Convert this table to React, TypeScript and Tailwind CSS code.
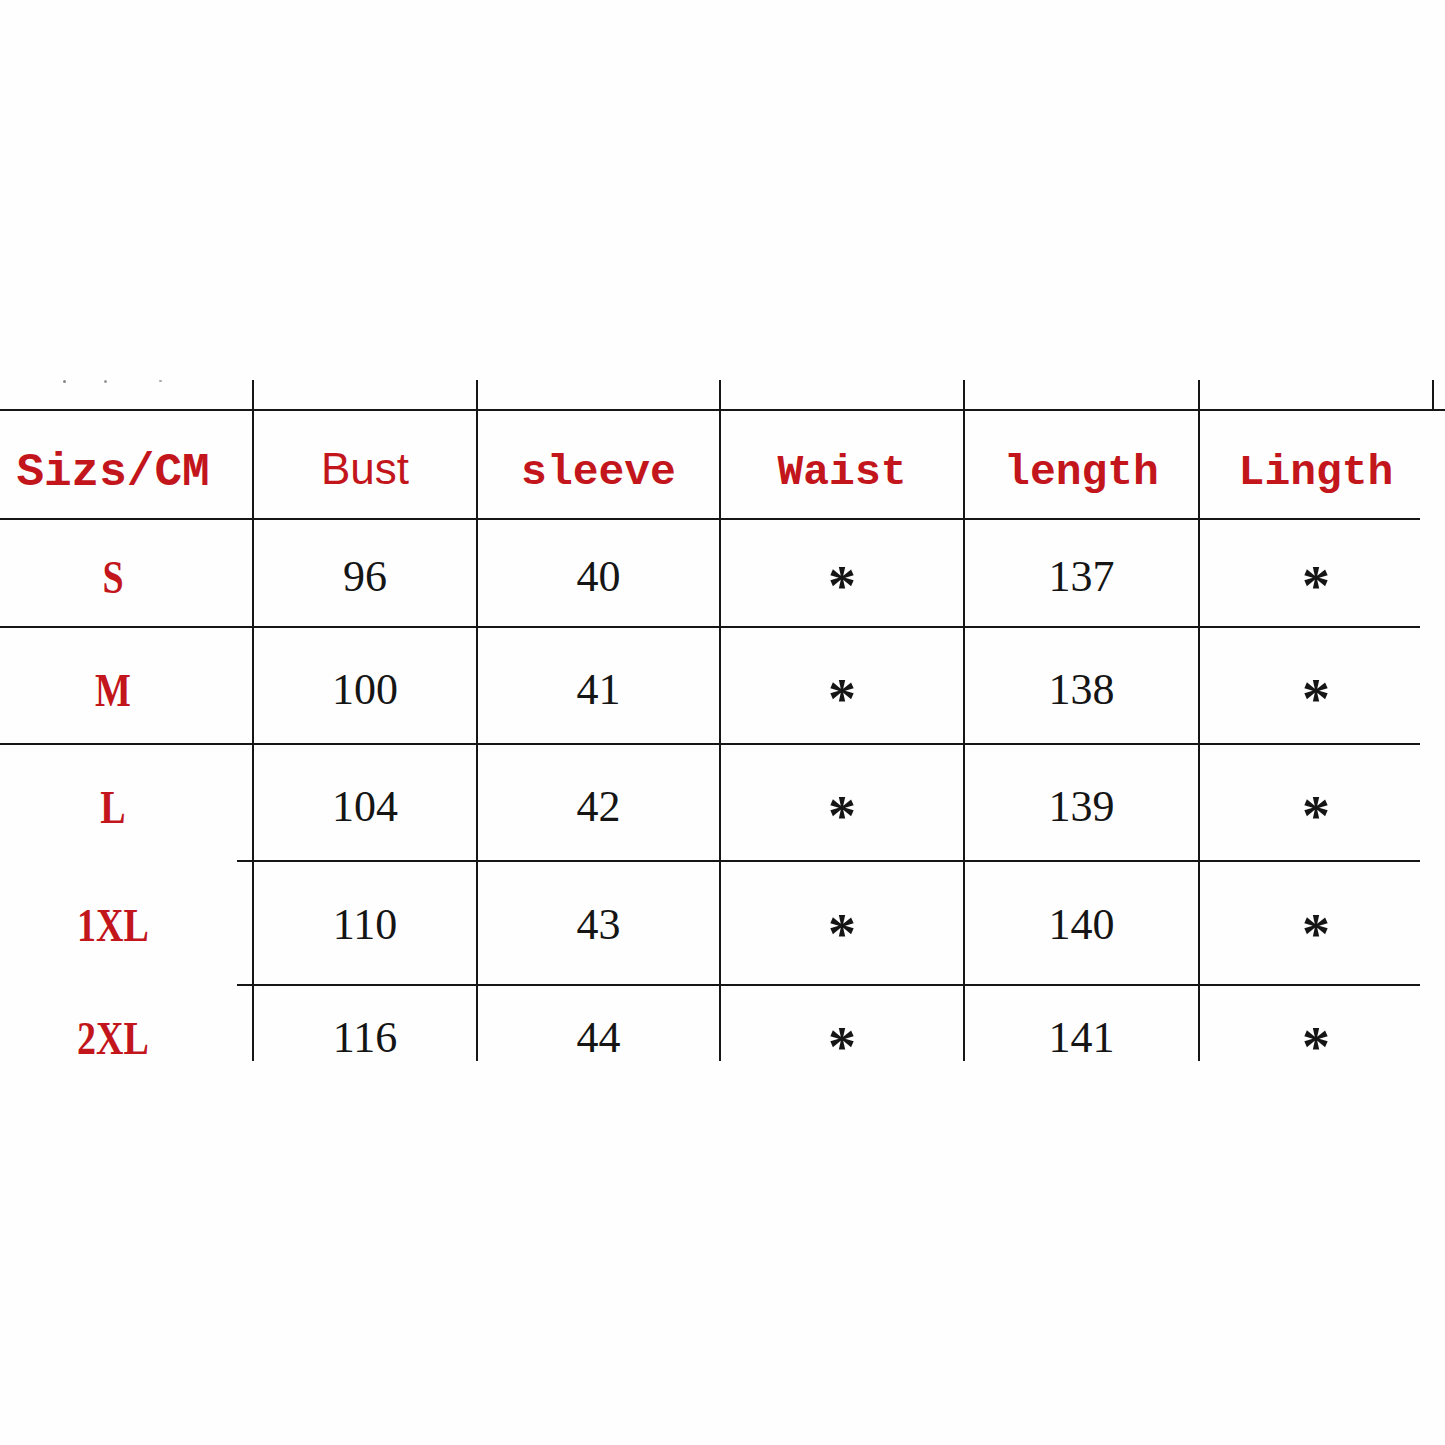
import React from 'react';

const cols = ['w-[252px]', 'w-[224px]', 'w-[243px]', 'w-[244px]', 'w-[235px]', 'w-[234px]'];

const mono = "font-['Liberation_Mono','DejaVu_Sans_Mono',monospace] font-bold text-[#c3161c]";
const serif = "font-['Liberation_Serif','DejaVu_Serif',serif]";

const headers = [
  { label: 'Sizs/CM', cls: `${mono} text-[46px]` },
  { label: 'Bust', cls: "font-['Liberation_Sans',Arial,sans-serif] text-[44px] text-[#c3161c] -translate-y-[4px]" },
  { label: 'sleeve', cls: `${mono} text-[43px]` },
  { label: 'Waist', cls: `${mono} text-[43px]` },
  { label: 'length', cls: `${mono} text-[43px]` },
  { label: 'Lingth', cls: `${mono} text-[43px]` },
];

const rows = [
  { size: 'S', bust: '96', sleeve: '40', length: '137', h: 'h-[106px]', pad: 'pt-[8px]' },
  { size: 'M', bust: '100', sleeve: '41', length: '138', h: 'h-[115px]', pad: 'pt-[8px]' },
  { size: 'L', bust: '104', sleeve: '42', length: '139', h: 'h-[115px]', pad: 'pt-[8px]' },
  { size: '1XL', bust: '110', sleeve: '43', length: '140', h: 'h-[122px]', pad: 'pt-[4px]' },
  { size: '2XL', bust: '116', sleeve: '44', length: '141', h: 'h-[75px]', pad: 'pt-[28px]' },
];

const Divider = ({ cls }: { cls: string }) => <div className={`h-[2px] bg-[#161616] ${cls}`} />;

const Cell = ({ i, children, cls }: { i: number; children?: React.ReactNode; cls?: string }) => (
  <div
    className={`${cols[i]} h-full flex items-center justify-center ${i > 0 ? 'border-l-2 border-[#161616]' : 'pr-[26px]'} ${cls ?? ''}`}
  >
    {children}
  </div>
);

const Star = () => (
  <span className={`${serif} font-bold text-[56px] leading-none text-[#151515] translate-y-[9px]`}>*</span>
);

const App = () => {
  return (
    <div className="w-[1445px] min-h-[1445px] bg-[#fefefe] pt-[380px]">
      {/* cut-off row above the table */}
      <div className="flex h-[29px]">
        <div className={`${cols[0]} h-full flex gap-[38px] pl-[63px]`}>
          <span className="w-[3px] h-[3px] bg-[#888] rounded-full" />
          <span className="w-[3px] h-[3px] bg-[#999] rounded-full" />
          <span className="w-[3px] h-[2px] bg-[#aaa] rounded-full ml-[14px]" />
        </div>
        {[1, 2, 3, 4, 5].map((i) => (
          <div key={i} className={`${cols[i]} h-full border-l-2 border-[#161616]`} />
        ))}
        <div className="w-[13px] h-full border-l-2 border-[#161616]" />
      </div>
      <Divider cls="w-[1445px]" />

      <div className="flex h-[107px]">
        {headers.map((hd, i) => (
          <Cell key={hd.label} i={i} cls="pt-[16px]">
            <span className={`${hd.cls} leading-none`}>{hd.label}</span>
          </Cell>
        ))}
      </div>

      {rows.map((r, idx) => (
        <React.Fragment key={r.size}>
          <Divider cls={idx >= 3 ? 'ml-[237px] w-[1183px]' : 'w-[1420px]'} />
          <div className={`flex ${r.h}`}>
            {[r.size, r.bust, r.sleeve, '*', r.length, '*'].map((v, i) => (
              <Cell key={i} i={i} cls={r.pad}>
                {i === 0 ? (
                  <span className={`${serif} font-bold text-[38px] leading-none text-[#c3161c] scale-y-[1.2]`}>{v}</span>
                ) : v === '*' ? (
                  <Star />
                ) : (
                  <span className={`${serif} text-[44px] leading-none text-[#151515]`}>{v}</span>
                )}
              </Cell>
            ))}
          </div>
        </React.Fragment>
      ))}
    </div>
  );
};

export default App;
